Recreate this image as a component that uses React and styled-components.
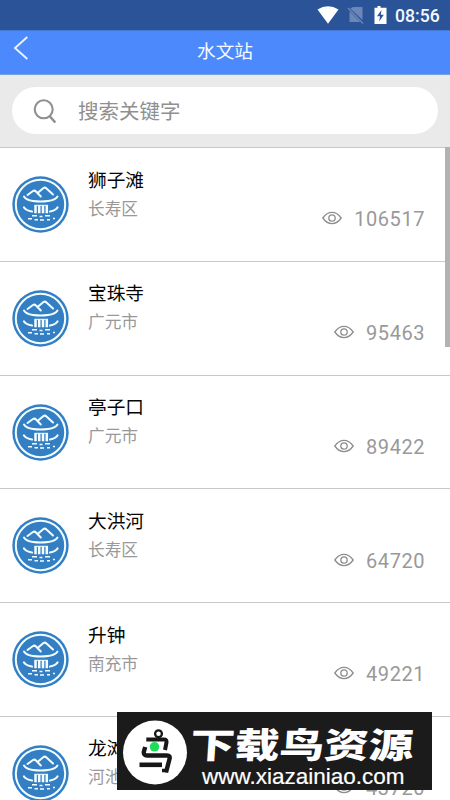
import React from 'react';
import styled, { createGlobalStyle } from 'styled-components';

const GlobalStyle = createGlobalStyle`
  * {
    box-sizing: border-box;
  }

  body {
    margin: 0;
    background: #fff;
    font-family: Roboto, 'Noto Sans CJK SC', sans-serif;
  }
`;

const Screen = styled.div`
  position: relative;
  display: flex;
  flex-direction: column;
  width: 450px;
  height: 800px;
  overflow: hidden;
  background: #fff;
`;

const StatusBar = styled.div`
  display: flex;
  flex: none;
  justify-content: flex-end;
  height: 30px;
  padding-right: 10px;
  background: #2b5397;
`;

const StatusIcons = styled.svg`
  width: 78px;
  height: 30px;
`;

const Clock = styled.span`
  width: 45px;
  color: #f4f8ff;
  font-size: 17.6px;
  font-weight: 500;
  line-height: 32px;
  white-space: nowrap;
`;

const NavBar = styled.header`
  display: grid;
  flex: none;
  grid-template-columns: 50px 1fr 50px;
  height: 45px;
  background: #4b89fd;
  border-top: 1px solid #4479d9;
  border-bottom: 1px solid #779edf;
`;

const BackButton = styled.button`
  padding: 0;
  border: none;
  background: none;
  cursor: pointer;

  svg {
    display: block;
    width: 50px;
    height: 43px;
  }
`;

const Title = styled.h1`
  margin: 0;
  color: #f5fbff;
  font-size: 18.7px;
  font-weight: 400;
  line-height: 42px;
  text-align: center;
`;

const SearchArea = styled.div`
  flex: none;
  height: 73px;
  padding: 12px 12px 0;
  background: #eaeaea;
  border-bottom: 1px solid #c9c9c9;
`;

const SearchBox = styled.div`
  display: flex;
  align-items: center;
  height: 47px;
  padding-left: 20px;
  border-radius: 24px;
  background: #fff;
`;

const SearchIcon = styled.svg`
  width: 26px;
  height: 28px;
  margin-right: 20px;
`;

const Placeholder = styled.span`
  padding-top: 3px;
  color: #8f8f8f;
  font-size: 20.5px;
  line-height: 47px;
`;

const List = styled.div`
  display: flex;
  flex: none;
  flex-direction: column;
`;

const Row = styled.div`
  display: flex;
  flex: none;
  height: 113.75px;
  padding: 0 25px 0 12px;
  border-bottom: 1px solid #c9c9c9;
`;

const Logo = styled.svg`
  flex: none;
  width: 57px;
  height: 57px;
  margin: 28px 19px 0 0;
`;

const Info = styled.div`
  flex: 1;
  padding-top: 18.5px;
`;

const Name = styled.div`
  color: #050505;
  font-size: 18.7px;
  line-height: 28px;
`;

const Area = styled.div`
  color: #999;
  font-size: 16.7px;
  line-height: 29px;
`;

const Views = styled.div`
  display: flex;
  align-items: center;
  height: 30px;
  margin-top: 56.4px;
  color: #999;
  font-size: 20px;
  letter-spacing: 0.55px;
`;

const EyeIcon = styled.svg`
  width: 20px;
  height: 14px;
  margin: 0 12px 2px 0;
`;

const Scrollbar = styled.div`
  position: absolute;
  top: 147px;
  right: 0;
  width: 5px;
  height: 200px;
  background: #b2b2b2;
`;

const Banner = styled.div`
  position: absolute;
  top: 712px;
  left: 117px;
  display: flex;
  width: 315px;
  height: 78px;
  padding: 7px 0 0 5px;
  background: #1b1b1b;
`;

const BirdLogo = styled.svg`
  flex: none;
  width: 66px;
  height: 66px;
`;

const BannerText = styled.div`
  display: flex;
  flex-direction: column;
  color: #fff;
  white-space: nowrap;
`;

const BannerTitle = styled.div`
  height: 45px;
  padding-left: 2px;
  font-family: 'Noto Sans CJK SC', sans-serif;
  font-size: 35px;
  font-weight: 900;
  line-height: 48px;
  transform: scaleX(1.275) skewX(-3deg);
  transform-origin: 0 50%;
`;

const BannerUrl = styled.div`
  padding-left: 14px;
  font-family: 'Liberation Sans', sans-serif;
  font-size: 22.5px;
  line-height: 26px;
  -webkit-text-stroke: 0.2px #fff;
`;

const stations = [
  { name: '狮子滩', area: '长寿区', views: 106517 },
  { name: '宝珠寺', area: '广元市', views: 95463 },
  { name: '亭子口', area: '广元市', views: 89422 },
  { name: '大洪河', area: '长寿区', views: 64720 },
  { name: '升钟', area: '南充市', views: 49221 },
  { name: '龙滩', area: '河池市', views: 43720 },
];

const StationLogo = () => (
  <Logo viewBox="0 0 57 57" fill="none" stroke="#f3ffff">
    <circle cx="28.5" cy="28.5" r="28.2" fill="#347fc4" stroke="none" />
    <circle cx="28.5" cy="28.5" r="24.7" strokeWidth="2" />
    <path d="M15.5 19 L21 15 Q22.5 14 24 15.5 L28.8 20.5 M25.5 17 L31.5 12 Q33 11 34.5 12.5 L41 18.5" strokeWidth="2" strokeLinecap="round" strokeLinejoin="round" />
    <path d="M12 20.5 Q14 24 21 25 Q28.5 26 36 25 Q43.5 24 45.5 20.5" strokeWidth="2" strokeLinecap="round" />
    <path d="M12 31.5 Q14 34.5 20 35.5 M45.5 31.5 Q43.5 34.5 38 35.5" strokeWidth="2.2" strokeLinecap="round" />
    <path d="M23.5 29.2 V37.2 M27.2 29.2 V37.2 M31 29.2 V37.2 M34.8 29.2 V37.2" strokeWidth="2.5" />
    <path d="M22.5 29.3 H36" strokeWidth="1" />
    <path d="M20 39.8 H25 M27.5 40.5 H30.5 M33 39.8 H38 M16 42.8 H20 M22.5 43.7 H26 M28 44 H32 M35 43.7 H38 M41 42.5 H43" strokeWidth="1.6" />
  </Logo>
);

const StationRow = ({ station }) => (
  <Row>
    <StationLogo />
    <Info>
      <Name>{station.name}</Name>
      <Area>{station.area}</Area>
    </Info>
    <Views>
      <EyeIcon viewBox="0 0 20 14" fill="none" stroke="#8e8e8e" strokeWidth="1.3">
        <path d="M0.8 7 Q4.8 1.4 10 1.4 T19.2 7 Q15.2 12.6 10 12.6 T0.8 7 Z" />
        <circle cx="10" cy="7" r="3.2" />
      </EyeIcon>
      {station.views}
    </Views>
  </Row>
);

const App = () => {
  return (
    <>
      <GlobalStyle />
      <Screen>
        <StatusBar>
          <StatusIcons viewBox="0 0 78 30">
            <path d="M0.5 9.5 Q11 2.8 21.5 9.5 L11 23.7 Z" fill="#fff" />
            <path d="M36 7 H45.5 V20 L33.3 8.5 Z M32.5 11.2 L43.2 22 H32.5 Z" fill="#6b87b8" />
            <path d="M31 8 L46 23.5" stroke="#6b87b8" strokeWidth="1.4" />
            <path d="M60.5 6 H63.5 V7.8 H69.5 V24 H57.5 V7.8 H60.5 Z" fill="#fff" />
            <path d="M64.5 10 L60 16.3 H63 L62.2 21.5 L66.8 14.8 H63.8 Z" fill="#2b5397" />
          </StatusIcons>
          <Clock>08:56</Clock>
        </StatusBar>
        <NavBar>
          <BackButton aria-label="返回">
            <svg viewBox="0 0 50 43" fill="none" stroke="#e9f4ff" strokeWidth="1.9">
              <path d="M27.3 6 L15 17 L27.3 28" />
            </svg>
          </BackButton>
          <Title>水文站</Title>
        </NavBar>
        <SearchArea>
          <SearchBox>
            <SearchIcon viewBox="0 0 26 28" fill="none" stroke="#909090" strokeWidth="2.1">
              <circle cx="11.7" cy="12.3" r="9" />
              <path d="M17.5 19 L23.3 25.5" strokeWidth="2.6" />
            </SearchIcon>
            <Placeholder>搜索关键字</Placeholder>
          </SearchBox>
        </SearchArea>
        <List>
          {stations.map((station) => (
            <StationRow key={station.name} station={station} />
          ))}
        </List>
        <Scrollbar />
        <Banner>
          <BirdLogo viewBox="0 0 66 66" fill="none" stroke="#171717">
            <circle cx="33" cy="33.5" r="32" fill="#fff" stroke="none" />
            <circle cx="36.5" cy="14.8" r="3.4" strokeWidth="2.3" />
            <path d="M24.3 20.5 H42 Q45 20.5 44.5 23.5 L43 31" strokeWidth="4" />
            <path d="M23.2 28 L21.8 33 Q21.5 36.5 25 36.5 H45 Q48.5 36.5 47.5 40 L44 53.5" strokeWidth="4.4" />
            <path d="M40 51.5 H44.5" strokeWidth="3.5" />
            <path d="M17.5 45.8 H40" strokeWidth="4.6" />
            <circle cx="32.5" cy="27.8" r="4.8" fill="#20dc5c" stroke="none" />
          </BirdLogo>
          <BannerText>
            <BannerTitle>下载鸟资源</BannerTitle>
            <BannerUrl>www.xiazainiao.com</BannerUrl>
          </BannerText>
        </Banner>
      </Screen>
    </>
  );
};

export default App;
